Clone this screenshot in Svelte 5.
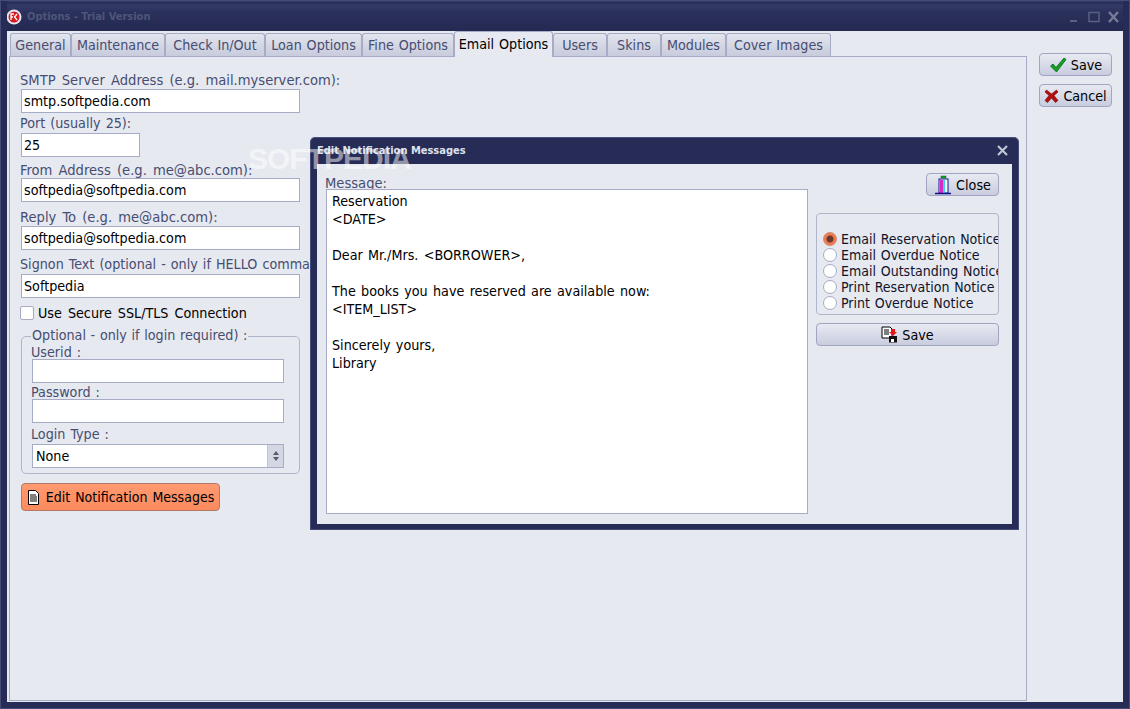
<script>
  const tabs = [
    { name: 'General', w: 61 },
    { name: 'Maintenance', w: 94 },
    { name: 'Check In/Out', w: 100 },
    { name: 'Loan Options', w: 97 },
    { name: 'Fine Options', w: 92 },
    { name: 'Email Options', w: 99 },
    { name: 'Users', w: 54 },
    { name: 'Skins', w: 54 },
    { name: 'Modules', w: 65 },
    { name: 'Cover Images', w: 105 }
  ];
  const notices = ['Email Reservation Notice', 'Email Overdue Notice', 'Email Outstanding Notice', 'Print Reservation Notice', 'Print Overdue Notice'];
  const message = `Reservation
<DATE>

Dear Mr./Mrs. <BORROWER>,

The books you have reserved are available now:
<ITEM_LIST>

Sincerely yours,
Library`;
</script>

<div class="window">
  <div class="titlebar">
    <svg class="logo" width="16" height="16" viewBox="0 0 16 16">
      <circle cx="8" cy="8" r="7.5" fill="#e8e8ee" />
      <circle cx="8" cy="8" r="5.5" fill="#d81820" />
      <path d="M5 11V5h3M5 8h2M11 5L8.500 8l2.500 3" fill="none" stroke="#fff" stroke-width="1.300" />
    </svg>
    <span class="title">Options - Trial Version</span>
    <div class="controls">
      <svg width="60" height="14" viewBox="0 0 60 14">
        <rect x="1" y="10" width="7" height="2" fill="#5a6080" />
        <rect x="20" y="2.500" width="10" height="9" fill="none" stroke="#5a6080" stroke-width="1.500" />
        <path d="M40 2l9 10M49 2l-9 10" stroke="#767c98" stroke-width="2.400" />
      </svg>
    </div>
  </div>

  <div class="content">
    <div class="left">
      <div class="tabs">
        {#each tabs as tab}
          <div class="tab" class:active={tab.name === 'Email Options'} style="width: {tab.w}px">{tab.name}</div>
        {/each}
      </div>
      <div class="panel">
        <div class="lbl">SMTP Server Address (e.g. mail.myserver.com):</div>
        <div class="input wide">smtp.softpedia.com</div>
        <div class="lbl plain">Port (usually 25):</div>
        <div class="input port">25</div>
        <div class="lbl from">From Address (e.g. me@abc.com):</div>
        <div class="input wide">softpedia@softpedia.com</div>
        <div class="lbl after">Reply To (e.g. me@abc.com):</div>
        <div class="input wide">softpedia@softpedia.com</div>
        <div class="lbl after plain">Signon Text (optional - only if HELLO command is needed):</div>
        <div class="input wide">Softpedia</div>
        <div class="check"><span class="box"></span>Use Secure SSL/TLS Connection</div>
        <div class="group">
          <span class="legend">Optional - only if login required) :</span>
          <div class="lbl plain userid">Userid :</div>
          <div class="input inner"></div>
          <div class="lbl plain password">Password :</div>
          <div class="input inner"></div>
          <div class="lbl plain login">Login Type :</div>
          <div class="input inner select">
            <span>None</span>
            <span class="spin">
              <svg width="10" height="14" viewBox="0 0 10 14"><path d="M5 2l3 4H2zM5 12l3-4H2z" fill="#555b70" /></svg>
            </span>
          </div>
        </div>
        <button class="btn edit">
          <svg width="13" height="15" viewBox="0 0 13 15">
            <path d="M1.500.5h7l3 3v11h-10z" fill="#fff" stroke="#000" />
            <path d="M3 5h6M3 7h7M3 9h7M3 11h7" stroke="#000" />
          </svg>
          Edit Notification Messages
        </button>
      </div>
    </div>
    <div class="side">
      <button class="btn side-btn">
        <svg width="18" height="16" viewBox="0 0 18 16"><path d="M1.500 9l2.500-2 3 3.500L15 1l2 1.500L7.500 15z" fill="#18a018" stroke="#063" stroke-width=".8" /></svg>
        Save
      </button>
      <button class="btn side-btn">
        <svg width="15" height="15" viewBox="0 0 15 15"><path d="M2.500 2l5 4 5-4 1.500 2-4 3.500 4 5-2.500 2-4-4.500-4 4.500-2.500-2 4-5-4-3.500z" fill="#b01010" stroke="#700" stroke-width=".6" /></svg>
        Cancel
      </button>
    </div>
  </div>

  <div class="dialog">
    <div class="dialog-title">
      <span>Edit Notification Messages</span>
      <svg width="11" height="11" viewBox="0 0 11 11"><path d="M1 1l9 9M10 1l-9 9" stroke="#c0c4d4" stroke-width="2.200" /></svg>
    </div>
    <div class="dialog-body">
      <div class="msg-col">
        <div class="lbl msg-lbl">Message:</div>
        <div class="memo">{message}</div>
      </div>
      <div class="dlg-side">
        <button class="btn close">
          <svg width="18" height="20" viewBox="0 0 18 20">
            <rect x="7" y="1" width="5" height="2" fill="#18a018" stroke="#063" stroke-width=".5" />
            <rect x="5" y="4" width="9" height="14" fill="#fff" stroke="#10108a" />
            <rect x="6" y="5" width="3" height="13" fill="#d828c8" />
            <rect x="9" y="5" width="2" height="13" fill="#30d8e0" />
            <path d="M1 18.500h16" stroke="#10108a" stroke-width="1.500" />
          </svg>
          Close
        </button>
        <div class="radios">
          {#each notices as n, i}
            <div class="radio"><span class="dot" class:on={i === 0}></span>{n}</div>
          {/each}
        </div>
        <button class="btn dlg-save">
          <svg width="17" height="17" viewBox="0 0 17 17">
            <path d="M1 1h8l2 2v9H1z" fill="#fff" stroke="#000" />
            <path d="M3 4h5M3 6h5M3 8h5" stroke="#000" />
            <rect x="8" y="10" width="8" height="6.500" fill="#111" />
            <rect x="10" y="13" width="3" height="3" fill="#fff" />
            <path d="M10 3h4v3h2l-4 4-4-4h2z" fill="#e01818" />
          </svg>
          Save
        </button>
      </div>
    </div>
  </div>

  <div class="watermark">SOFTPEDIA</div>
</div>

<style>
  :global(body) {
    margin: 0;
    background: #e6e9ef;
  }

  .window {
    position: relative;
    width: 1130px;
    height: 709px;
    box-sizing: border-box;
    background: #e6e9ef;
    border: 7px solid #262c56;
    border-top: 0;
    outline: 1px solid #444b78;
    outline-offset: -1px;
    overflow: hidden;
    display: flex;
    flex-direction: column;
    font-family: "DejaVu Sans Condensed", "DejaVu Sans", sans-serif;
    font-size: 14.2px;
    word-spacing: 1.3px;
    color: #000;
  }

  .titlebar {
    height: 31px;
    margin: 0 -7px;
    padding: 2px 0 0 6px;
    box-sizing: border-box;
    flex: none;
    display: flex;
    align-items: center;
    gap: 4px;
    background: linear-gradient(#3e4570 0, #262c56 3px, #343b68 5px, #2b315c 12px, #232951 100%);
    border-radius: 5px 5px 0 0;
  }

  .title {
    font-size: 11px;
    font-weight: bold;
    word-spacing: 0;
    color: #4f5679;
    margin-left: 1px;
  }

  .controls {
    margin-left: auto;
    display: flex;
    padding-right: 1px;
  }

  .content {
    flex: 1;
    display: flex;
    min-height: 0;
  }

  .left {
    width: 1020px;
    flex: none;
    padding: 2px 0 1px 2px;
    box-sizing: border-box;
    display: flex;
    flex-direction: column;
  }

  .tabs {
    display: flex;
    height: 23px;
    padding-left: 1px;
    flex: none;
  }

  .tab {
    padding-top: 3px;
    box-sizing: border-box;
    height: 24px;
    text-align: center;
    word-spacing: 0.8px;
    background: linear-gradient(#e2e5ed, #c6cadb);
    border: 1px solid #a6abc6;
    border-bottom: 0;
    border-radius: 3px 3px 0 0;
    color: #474d72;
    white-space: nowrap;
  }

  .tab.active {
    height: 26px;
    margin-top: -2px;
    padding-top: 4px;
    background: #e6e9ef;
    color: #000;
    position: relative;
    z-index: 1;
  }

  .panel {
    flex: 1;
    border: 1px solid #a6abc6;
    padding: 12px 0 0 11px;
    display: flex;
    flex-direction: column;
    align-items: flex-start;
  }

  .lbl {
    color: #474d72;
    font-size: 14.6px;
    word-spacing: 2px;
    line-height: 21px;
    height: 20px;
    margin-left: -1px;
    white-space: nowrap;
  }

  .plain {
    font-size: 14.2px;
    word-spacing: 1px;
  }

  .from {
    height: 19px;
    margin-top: 2px;
  }

  .after {
    margin-top: 4px;
  }

  .input {
    box-sizing: border-box;
    height: 24px;
    background: #fff;
    border: 1px solid #a6abc6;
    padding: 0 2px;
    line-height: 22px;
    white-space: nowrap;
    display: flex;
  }

  .wide {
    width: 279px;
  }

  .port {
    width: 119px;
  }

  .check {
    display: flex;
    align-items: center;
    gap: 4px;
    height: 20px;
    margin: 5px 0 0 -1px;
    word-spacing: 2px;
  }

  .box {
    width: 12px;
    height: 12px;
    background: #fff;
    border: 1px solid #a6abc6;
    border-radius: 2px;
  }

  .group {
    position: relative;
    box-sizing: border-box;
    width: 279px;
    height: 138px;
    border: 1px solid #b0b5cc;
    border-radius: 5px;
    padding: 5px 0 0 10px;
    margin-top: 13px;
  }

  .legend {
    position: absolute;
    top: -12px;
    left: 9px;
    padding: 0 1px;
    background: #e6e9ef;
    color: #474d72;
    word-spacing: 0.6px;
    line-height: 20px;
    white-space: nowrap;
  }

  .userid {
    height: 17px;
    line-height: 20px;
  }

  .password {
    height: 16px;
    line-height: 18px;
  }

  .login {
    height: 21px;
    line-height: 22px;
  }

  .inner {
    width: 252px;
  }

  .select {
    padding: 0 0 0 3px;
    justify-content: space-between;
  }

  .spin {
    width: 15px;
    display: flex;
    align-items: center;
    justify-content: center;
    background: #d3d6e3;
    border-left: 1px solid #c2c6d8;
  }

  .btn {
    font: inherit;
    word-spacing: inherit;
    color: #000;
    height: 23px;
    box-sizing: border-box;
    border: 1px solid #a0a5c2;
    border-radius: 4px;
    background: linear-gradient(#e8eaf2, #c8ccde);
    display: flex;
    align-items: center;
    justify-content: center;
    gap: 4px;
    padding: 0;
    white-space: nowrap;
  }

  .edit {
    width: 199px;
    height: 28px;
    margin-top: 9px;
    font-size: 14px;
    word-spacing: 1px;
    background: linear-gradient(#ff9a70, #fb8a5e);
    border-color: #b07a68;
    gap: 6px;
  }

  .side {
    padding: 22px 0 0 12px;
    display: flex;
    flex-direction: column;
    gap: 8px;
  }

  .side-btn {
    width: 73px;
  }

  .watermark {
    position: absolute;
    left: 241px;
    top: 142px;
    font-family: "Liberation Sans", sans-serif;
    font-size: 30px;
    font-weight: bold;
    letter-spacing: -1px;
    word-spacing: 0;
    color: rgba(255, 255, 255, 0.5);
    pointer-events: none;
  }

  .dialog {
    position: absolute;
    left: 303px;
    top: 137px;
    width: 709px;
    height: 393px;
    box-sizing: border-box;
    background: #262c56;
    border: 1px solid #444b78;
    border-radius: 5px 5px 0 0;
    border-top-color: #4a5180;
    padding: 0 6px 5px 6px;
    display: flex;
    flex-direction: column;
  }

  .dialog-title {
    height: 25px;
    margin-bottom: 1px;
    flex: none;
    display: flex;
    align-items: center;
    justify-content: space-between;
    font-size: 11px;
    font-weight: bold;
    word-spacing: 0;
    color: #dfe2ec;
    padding-right: 4px;
  }

  .dialog-body {
    flex: 1;
    background: #e6e9ef;
    display: flex;
    padding: 10px 0 0 9px;
    gap: 8px;
    min-height: 0;
  }

  .msg-col {
    width: 482px;
    flex: none;
  }

  .msg-lbl {
    height: 15px;
    line-height: 17px;
    margin-left: -1px;
    overflow: hidden;
  }

  .memo {
    box-sizing: border-box;
    height: 325px;
    background: #fff;
    border: 1px solid #a6abc6;
    padding: 2px 5px;
    line-height: 18px;
    white-space: pre;
  }

  .dlg-side {
    width: 183px;
    flex: none;
    display: flex;
    flex-direction: column;
    align-items: stretch;
    margin-top: -1px;
  }

  .close {
    align-self: flex-end;
    width: 73px;
    margin-bottom: 17px;
  }

  .radios {
    box-sizing: border-box;
    height: 102px;
    border: 1px solid #b0b5cc;
    border-radius: 4px;
    padding-top: 17px;
    overflow: hidden;
    margin-bottom: 8px;
  }

  .radio {
    display: flex;
    align-items: center;
    gap: 4px;
    height: 16px;
    padding-left: 6px;
    font-size: 14px;
    word-spacing: 0.8px;
    white-space: nowrap;
    color: #10142c;
  }

  .dot {
    box-sizing: border-box;
    width: 14px;
    height: 14px;
    flex: none;
    border-radius: 50%;
    background: #fff;
    border: 1px solid #a6abc6;
  }

  .dot.on {
    background: radial-gradient(circle, #6a3a2a 0 3px, #f07a50 4px);
    border-color: #d08a70;
  }
</style>
